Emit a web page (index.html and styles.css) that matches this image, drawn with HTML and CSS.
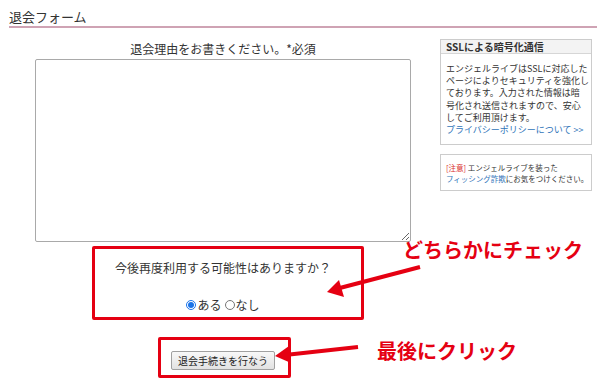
FILE: index.html
```html
<!DOCTYPE html>
<html lang="ja">
<head>
    <meta charset="UTF-8">
    <title>退会フォーム</title>
    <link rel="stylesheet" href="styles.css">
</head>
<body>
    <h1 class="page-title">退会フォーム</h1>
    <div class="content">
        <form class="main">
            <label class="field-label" for="reason">退会理由をお書きください。*必須</label>
            <textarea id="reason" class="reason"></textarea>
            <p class="question">今後再度利用する可能性はありますか？</p>
            <div class="choices">
                <label><input type="radio" name="again" checked>ある</label>
                <label><input type="radio" name="again">なし</label>
            </div>
            <button type="button" class="submit">退会手続きを行なう</button>
        </form>
        <div class="sidebar">
            <div class="side-box">
                <div class="side-head">SSLによる暗号化通信</div>
                <div class="side-body">
                    エンジェルライブはSSLに対応した<br>
                    ページによりセキュリティを強化し<br>
                    ております。入力された情報は暗<br>
                    号化され送信されますので、安心<br>
                    してご利用頂けます。<br>
                    <a href="#">プライバシーポリシーについて &gt;&gt;</a>
                </div>
            </div>
            <div class="side-box notice">
                <span class="warn">[注意]</span> エンジェルライブを装った<br>
                <a href="#">フィッシング詐欺</a>にお気をつけください。
            </div>
        </div>
    </div>

    <!-- annotations drawn over the screenshot -->
    <div class="mark mark-choice"></div>
    <div class="mark mark-button"></div>
    <span class="note note-choice">どちらかにチェック</span>
    <span class="note note-button">最後にクリック</span>
    <svg class="arrows" width="600" height="381" viewBox="0 0 600 381">
        <line x1="420" y1="267" x2="336" y2="289" stroke="#e50012" stroke-width="4"/>
        <polygon points="327,292 339,280 344,297" fill="#e50012"/>
        <line x1="358" y1="347" x2="285" y2="355" stroke="#e50012" stroke-width="4"/>
        <polygon points="275,356 289,346 291,363" fill="#e50012"/>
    </svg>
</body>
</html>
```

FILE: styles.css
```css
body {
    margin: 0;
    font-family: "Noto Sans CJK JP", "Liberation Sans", sans-serif;
    color: #333;
    background-color: #fff;
    position: relative;
    width: 600px;
    height: 381px;
    overflow: hidden;
}
.page-title {
    margin: 0 3px 0 9px;
    padding: 9px 0 1px;
    font-size: 13px;
    line-height: 16px;
    font-weight: normal;
    border-bottom: 2px solid #cfa3b4;
}
.content {
    display: flex;
    padding-top: 10px;
}
.main {
    width: 430px;
    margin-left: 8px;
    margin-right: 2px;
    display: flex;
    flex-direction: column;
    align-items: center;
}
.field-label {
    margin-top: 3px;
    font-size: 12px;
    line-height: 16px;
}
.reason {
    margin-top: 2px;
    width: 376px;
    height: 183px;
    box-sizing: border-box;
    border: 1px solid #a9a9a9;
    border-radius: 2px;
}
.question {
    margin: 18px 0 0;
    font-size: 12px;
    line-height: 16px;
}
.choices {
    margin-top: 21px;
    font-size: 12px;
    line-height: 16px;
    display: flex;
    gap: 3px;
}
.choices label {
    display: flex;
    align-items: center;
}
.choices input {
    width: 10px;
    height: 10px;
    margin: 0 1px 0 0;
    accent-color: #1a73e8;
}
.submit {
    margin-top: 38px;
    height: 19px;
    padding: 0 6px;
    font-family: inherit;
    font-size: 10px;
    color: #222;
    background: linear-gradient(#f8f8f8, #e2e2e2);
    border: 1px solid #a0a0a0;
    border-radius: 2px;
}
.sidebar {
    width: 152px;
    padding-top: 1px;
}
.side-box {
    border: 1px solid #cccccc;
    margin-bottom: 9px;
}
.side-head {
    font-size: 10px;
    font-weight: bold;
    line-height: 13px;
    padding: 0 5px;
    background-color: #f3f3f3;
    border-bottom: 1px solid #d6d6d6;
}
.side-body {
    font-size: 9px;
    line-height: 12.2px;
    padding: 9px 5px 8px;
    white-space: nowrap;
}
.side-body a {
    color: #2f74b9;
    text-decoration: none;
}
.notice {
    font-size: 7.5px;
    line-height: 11px;
    padding: 7px 5px 6px;
    white-space: nowrap;
}
.notice .warn {
    color: #d9302c;
}
.notice a {
    color: #2f74b9;
    text-decoration: none;
}
.mark {
    position: absolute;
    border: 3px solid #e50012;
    border-radius: 2px;
    box-sizing: border-box;
}
.mark-choice {
    left: 92px;
    top: 246px;
    width: 272px;
    height: 74px;
}
.mark-button {
    left: 158px;
    top: 337px;
    width: 133px;
    height: 41px;
}
.note {
    position: absolute;
    font-size: 20px;
    line-height: 24px;
    font-weight: bold;
    color: #e50012;
    white-space: nowrap;
}
.note-choice {
    left: 403px;
    top: 238px;
}
.note-button {
    left: 377px;
    top: 339px;
}
.arrows {
    position: absolute;
    left: 0;
    top: 0;
    pointer-events: none;
}
```
